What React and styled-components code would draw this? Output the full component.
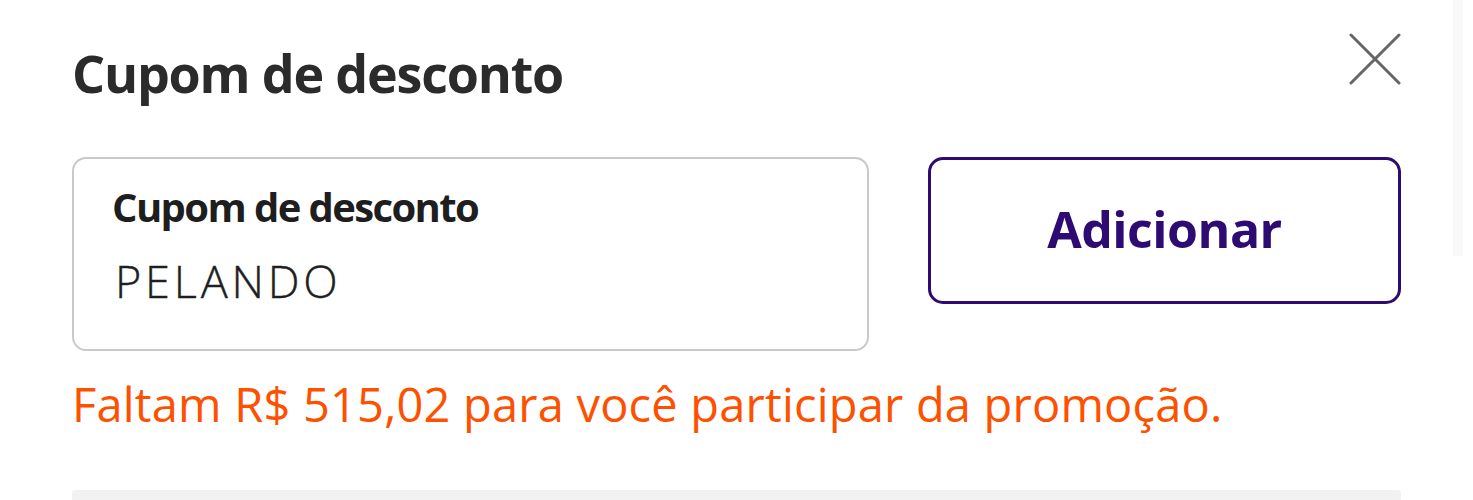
import React from "react";
import styled, { createGlobalStyle } from "styled-components";

const Global = createGlobalStyle`
  html, body { margin: 0; padding: 0; background: #fff; }
  body { font-family: "Open Sans", "Noto Sans", sans-serif; overflow: hidden; }
`;

const Page = styled.div`
  position: relative;
  width: 1473px;
  height: 500px;
  background: #fff;
  overflow: hidden;
`;

const Scrollbar = styled.div`
  position: absolute;
  top: 0;
  left: 1453px;
  width: 10px;
  height: 256px;
  background: #f9f9f9;
`;

const Sheet = styled.div`
  padding: 27px 72px 0 72px;
  display: flex;
  flex-direction: column;
`;

const Header = styled.div`
  display: flex;
  justify-content: space-between;
  align-items: flex-start;
`;

const Title = styled.h2`
  margin: 0;
  font-size: 52px;
  font-weight: 700;
  color: #2b2b2b;
  line-height: 92px;
  letter-spacing: -1.2px;
`;

const Close = styled.button`
  border: 0;
  background: none;
  padding: 0;
  width: 56px;
  height: 56px;
  margin-top: 4px;
  margin-right: -2px;
  display: flex;
  align-items: center;
  justify-content: center;
  cursor: pointer;
`;

const Row = styled.div`
  display: flex;
  align-items: flex-start;
  gap: 59px;
  margin-top: 38px;
`;

const Field = styled.label`
  box-sizing: border-box;
  width: 797px;
  height: 194px;
  border: 2px solid #c9c9c9;
  border-radius: 14px;
  padding: 23px 38px 0 38px;
  display: flex;
  flex-direction: column;
`;

const FieldLabel = styled.span`
  font-size: 40px;
  font-weight: 700;
  color: #1e1e1e;
  line-height: 50px;
  letter-spacing: -1.6px;
`;

const FieldValue = styled.span`
  margin-top: 24px;
  padding-left: 3px;
  font-family: "Open Sans", "Noto Sans", sans-serif;
  font-size: 45px;
  font-weight: 300;
  -webkit-text-stroke: 0.4px #1f1f1f;
  color: #1f1f1f;
  line-height: 50px;
  letter-spacing: 3.8px;
`;

const AddButton = styled.button`
  box-sizing: border-box;
  width: 473px;
  height: 147px;
  border: 3px solid #2d0b73;
  border-radius: 15px;
  background: #fff;
  color: #2d0b73;
  font-family: "Open Sans", "Noto Sans", sans-serif;
  font-size: 50px;
  font-weight: 700;
  letter-spacing: -0.5px;
  padding: 0 0 4px 0;
  cursor: pointer;
`;

const Message = styled.p`
  margin: 21px 0 0 0;
  font-size: 47px;
  color: #fd5100;
  line-height: 64px;
  letter-spacing: 0.2px;
`;

const Divider = styled.div`
  margin-top: 54px;
  height: 12px;
  background: #f2f2f2;
  border-radius: 3px 3px 0 0;
`;

export default function App() {
  return (
    <Page>
      <Global />
      <Scrollbar />
      <Sheet>
        <Header>
          <Title>Cupom de desconto</Title>
          <Close aria-label="Fechar">
            <svg width="52" height="52" viewBox="0 0 52 52" fill="none">
              <path d="M2 2L50 50M50 2L2 50" stroke="#666" strokeWidth="3" strokeLinecap="round" />
            </svg>
          </Close>
        </Header>
        <Row>
          <Field>
            <FieldLabel>Cupom de desconto</FieldLabel>
            <FieldValue>PELANDO</FieldValue>
          </Field>
          <AddButton>Adicionar</AddButton>
        </Row>
        <Message>Faltam R$ 515,02 para você participar da promoção.</Message>
        <Divider />
      </Sheet>
    </Page>
  );
}
